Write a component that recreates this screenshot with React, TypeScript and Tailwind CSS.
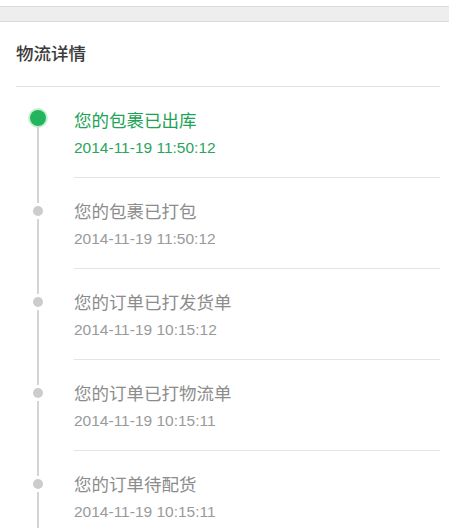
import React from "react";

type Step = { title: string; time: string };

const steps: Step[] = [
  { title: "您的包裹已出库", time: "2014-11-19 11:50:12" },
  { title: "您的包裹已打包", time: "2014-11-19 11:50:12" },
  { title: "您的订单已打发货单", time: "2014-11-19 10:15:12" },
  { title: "您的订单已打物流单", time: "2014-11-19 10:15:11" },
  { title: "您的订单待配货", time: "2014-11-19 10:15:11" },
];

const font = { fontFamily: '"Liberation Sans", "Noto Sans CJK SC", sans-serif' };

export default function App() {
  return (
    <div className="min-h-[528px] bg-white" style={font}>
      <div className="h-[6px] bg-white" />
      <div className="h-[16px] bg-[#eeeeee] border-y border-[#dcdcdc]" />

      <div className="pl-4 pr-[9px]">
        <div className="h-[65px] flex items-center border-b border-[#e2e2e2]">
          <h2 className="text-[17.5px] font-medium text-[#3a3a3a]">物流详情</h2>
        </div>

        <ul>
          {steps.map((s, i) => {
            const active = i === 0;
            return (
              <li key={i} className="flex">
                {/* rail: line segments with the node between them */}
                <div className="w-[58px] shrink-0">
                  <div className="ml-[15px] w-[14px] h-full flex flex-col items-center">
                    <div className={`w-[2px] ${active ? "h-[23px]" : "h-[25px] bg-[#d4d4d4]"}`} />
                    {active ? (
                      <div className="w-[16px] h-[16px] rounded-full bg-[#22b55e] ring-2 ring-[#c9efd6] shrink-0" />
                    ) : (
                      <div className="w-[10px] h-[10px] my-[3px] rounded-full bg-[#cccccc] shrink-0" />
                    )}
                    <div className="flex-1 w-[2px] bg-[#d4d4d4]" />
                  </div>
                </div>
                <div className="flex-1 border-b border-[#e4e4e4] pt-[22px] pb-[19px]">
                  <div
                    className={`text-[17.5px] leading-[24px] ${active ? "text-[#21a356]" : "text-[#8c8c8c]"}`}
                  >
                    {s.title}
                  </div>
                  <div
                    className={`mt-[5px] text-[15.5px] leading-[20px] ${active ? "text-[#2aa55b]" : "text-[#9a9a9a]"}`}
                  >
                    {s.time}
                  </div>
                </div>
              </li>
            );
          })}
        </ul>
      </div>
    </div>
  );
}
